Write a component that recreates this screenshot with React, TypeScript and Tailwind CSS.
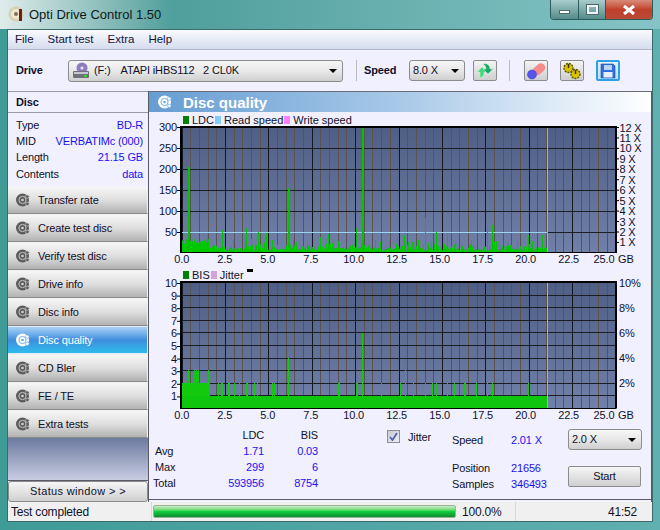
const ui = "font-['Liberation_Sans',sans-serif]";

// deterministic noise for the little LDC bars
function noise(i: number) {
  const v = Math.sin(i * 12.9898) * 43758.5453;
  return v - Math.floor(v);
}

const X0 = 181.5;
const PX_PER_GB = 17.36;
const END = 547.5;
const xTicks = ["0.0", "2.5", "5.0", "7.5", "10.0", "12.5", "15.0", "17.5", "20.0", "22.5", "25.0"];

const ldcSpikes: [number, number][] = [
  [188, 167], [189, 167], [207, 235], [222, 230], [233, 240], [245, 238], [246, 228], [251, 239], [258, 232], [266, 233],
  [272, 240], [288, 188], [289, 188], [293, 240], [307, 241], [320, 237], [328, 234], [338, 241], [356, 228], [362, 127],
  [363, 127], [375, 240], [389, 241], [397, 236], [404, 235], [412, 242], [418, 240], [425, 218], [431, 242], [436, 232],
  [447, 233], [455, 243], [471, 240], [487, 226], [492, 225], [496, 241], [507, 242], [517, 241], [528, 235], [532, 241], [542, 235],
];

const bisTwo = [
  218, 222, 228, 221, 229, 234, 239, 246, 247, 254, 257, 272, 274, 338, 339, 356, 357, 381, 400, 405, 413, 425, 432, 436, 447, 454, 464, 465, 476, 487, 492, 528,
];
const bisSpikes: [number, number][] = [
  [188, 370], [191, 383], [194, 370], [196, 370], [198, 370], [208, 370], [288, 358], [362, 333], [405, 370],
];

function PlotFrame({ top, bottom, step }: { top: number; bottom: number; step: number }) {
  const id = `plot${top}`;
  const lines: number[] = [];
  for (let y = bottom - step; y > top + 1; y -= step) lines.push(y);
  const verticals = Array.from({ length: 51 }, (_, i) => i);
  return (
    <>
      <defs>
        <linearGradient id={id} x1="0" y1="0" x2="0" y2="1">
          <stop offset="0" stopColor="#4e5e84" />
          <stop offset="1" stopColor="#7180a8" />
        </linearGradient>
      </defs>
      <rect x={X0} y={top} width={434} height={bottom - top} fill={`url(#${id})`} />
      {verticals.map((i) => {
        const x = Math.round(X0 + (i * PX_PER_GB) / 2) + 0.5;
        return (
          <line key={i} x1={x} x2={x} y1={top} y2={bottom} stroke={i % 5 === 0 ? "#16161e" : "#5a5352"} strokeWidth={1} />
        );
      })}
      {lines.map((y) => (
        <line key={y} x1={X0} x2={615.5} y1={Math.round(y) + 0.5} y2={Math.round(y) + 0.5} stroke="#1c1c24" strokeWidth={1} />
      ))}
    </>
  );
}

function Axes({ top, bottom }: { top: number; bottom: number }) {
  return (
    <>
      <path d={`M181 ${bottom + 0.5}V${top}H616V${bottom + 0.5}`} fill="none" stroke="#000" strokeWidth={2} />
      <line x1={180} x2={616} y1={bottom + 0.5} y2={bottom + 0.5} stroke="#000" strokeWidth={1} />
      {xTicks.map((t, i) => (
        <text key={t} x={i === 10 ? 604 : 181.7 + i * 43} y={bottom + 11} textAnchor="middle" fill="#10102a" fontSize={11}>
          {t}
        </text>
      ))}
      <text x={618} y={bottom + 11} fill="#10102a" fontSize={11}>
        GB
      </text>
    </>
  );
}

function LdcChart() {
  const bars: { x: number; y: number }[] = [];
  for (let x = 182; x < END; x++) {
    const base = x < 210 ? 8 + noise(x) * 5 : 1.5 + noise(x) * noise(x + 300) * 10;
    bars.push({ x, y: 252 - base });
  }
  const left = ["300", "250", "200", "150", "100", "50"];
  const right = ["12 X", "11 X", "10 X", "9 X", "8 X", "7 X", "6 X", "5 X", "4 X", "3 X", "2 X", "1 X"];
  return (
    <svg width={502} height={140} viewBox="149 126 502 140" className="block overflow-visible font-['Liberation_Sans',sans-serif]">
      <PlotFrame top={127} bottom={253} step={21} />
      <line x1={182} x2={END} y1={232.5} y2={232.5} stroke="#98d4f2" strokeWidth={1} />
      {bars.map((b) => (
        <line key={b.x} x1={b.x + 0.5} x2={b.x + 0.5} y1={252.5} y2={b.y} stroke="#00c800" />
      ))}
      {ldcSpikes.map(([x, y]) => (
        <line key={x} x1={x + 0.5} x2={x + 0.5} y1={252.5} y2={y} stroke="#00c400" />
      ))}
      <line x1={END} x2={END} y1={127} y2={252} stroke="#63c5e8" strokeWidth={1} />
      <Axes top={127} bottom={252} />
      {left.map((t, i) => (
        <g key={t}>
          <text x={177} y={131 + i * 21} textAnchor="end" fill="#10102a" fontSize={11}>
            {t}
          </text>
          <line x1={177} x2={181} y1={127.5 + i * 21} y2={127.5 + i * 21} stroke="#000" />
        </g>
      ))}
      {right.map((t, i) => (
        <g key={t}>
          <line x1={616} x2={619} y1={127.5 + i * 10.45} y2={127.5 + i * 10.45} stroke="#000" />
          <text x={619.5} y={131.5 + i * 10.45} fill="#10102a" fontSize={11}>
            {t}
          </text>
        </g>
      ))}
    </svg>
  );
}

function BisChart() {
  const left = ["10", "9", "8", "7", "6", "5", "4", "3", "2", "1"];
  const right = ["10%", "8%", "6%", "4%", "2%"];
  return (
    <svg width={502} height={141} viewBox="149 281 502 141" className="block overflow-visible font-['Liberation_Sans',sans-serif]">
      <PlotFrame top={282} bottom={408} step={12.6} />
      <rect x={182} y={396} width={END - 182 + 0.5} height={12} fill="#0fc60f" />
      <rect x={182} y={383} width={28} height={13} fill="#13cb0c" />
      {bisTwo.map((x) => (
        <line key={x} x1={x + 0.5} x2={x + 0.5} y1={396} y2={383} stroke="#14c810" />
      ))}
      {bisSpikes.map(([x, y]) => (
        <line key={x} x1={x + 0.5} x2={x + 0.5} y1={396} y2={y} stroke="#14c810" />
      ))}
      <line x1={END} x2={END} y1={282} y2={408} stroke="#63c5e8" strokeWidth={1} />
      <Axes top={282} bottom={408} />
      {left.map((t, i) => (
        <g key={t}>
          <text x={177} y={287 + i * 12.6} textAnchor="end" fill="#10102a" fontSize={11}>
            {t}
          </text>
          <line x1={177} x2={181} y1={283.5 + i * 12.6} y2={283.5 + i * 12.6} stroke="#000" />
        </g>
      ))}
      {right.map((t, i) => (
        <text key={t} x={619} y={287 + i * 25.1} fill="#10102a" fontSize={11}>
          {t}
        </text>
      ))}
    </svg>
  );
}

function DiscIcon({ light, className }: { light?: boolean; className?: string }) {
  const c = light ? "#ffffff" : "#5b5b5b";
  const hole = light ? "#62a8e4" : "#d2d2d2";
  return (
    <svg width={16} height={16} viewBox="0 0 16 16" className={className}>
      <circle cx={7.5} cy={8} r={6.5} fill={c} />
      <circle cx={7.5} cy={8} r={3.6} fill="none" stroke={hole} strokeWidth={0.9} />
      <circle cx={7.5} cy={8} r={1.3} fill={hole} />
      <path d="M11 2.5l3.5 1.5-1.500 2.500-2.500-1zM11.500 10l3 1-1.500 3-2.500-1.500z" fill={c} stroke={hole} strokeWidth={0.6} />
    </svg>
  );
}

const navItems = ["Transfer rate", "Create test disc", "Verify test disc", "Drive info", "Disc info", "Disc quality", "CD Bler", "FE / TE", "Extra tests"];

function NavButton({ label }: { label: string }) {
  const active = label === "Disc quality";
  return (
    <div
      className={`h-[28px] flex items-center gap-[7px] pl-[7px] border-t border-b border-r ${
        active
          ? "bg-gradient-to-b from-[#a8d2f6] via-[#3e8ede] to-[#2cbcec] border-[#dfeaf6] text-white"
          : "bg-gradient-to-b from-[#f6f6f6] via-[#dedede] to-[#b2b2b2] border-[#f2f2f2] border-b-[#8a8a8a] text-[#10102a]"
      }`}
    >
      <DiscIcon light={active} className="shrink-0" />
      <span>{label}</span>
    </div>
  );
}

function ToolButton({ children, selected }: { children: React.ReactNode; selected?: boolean }) {
  return (
    <div
      className={`w-[24px] h-[21px] flex items-center justify-center rounded-[2px] border bg-gradient-to-b ${
        selected ? "border-[#2f9fe8] border-2 from-[#e4f3fc] to-[#bfe0f6]" : "border-[#8c8c8c] from-[#f4f4f4] to-[#cfcfcf]"
      }`}
    >
      {children}
    </div>
  );
}

function Combo({ label, className }: { label: React.ReactNode; className: string }) {
  return (
    <div className={`flex items-center justify-between rounded-[3px] border border-[#8c8c8c] bg-gradient-to-b from-[#f6f6f6] via-[#e8e8e8] to-[#cfcfcf] text-[#10102a] ${className}`}>
      {label}
      <svg width={8} height={4} viewBox="0 0 8 4" className="mr-[5px] shrink-0">
        <path d="M0 0h8L4 4z" fill="#000" />
      </svg>
    </div>
  );
}

function InfoRow({ label, value }: { label: string; value: string }) {
  return (
    <div className="flex justify-between h-[16.3px] items-center">
      <span className="text-[#10102a]">{label}</span>
      <span className="text-[#1c10f0]">{value}</span>
    </div>
  );
}

function LegendSwatch({ color, label }: { color: string; label: string }) {
  return (
    <span className="flex items-center gap-[3px]">
      <span className={`w-[6px] h-[8px] ${color}`} />
      <span>{label}</span>
    </span>
  );
}

export default function App() {
  return (
    <div className={`w-[660px] h-[530px] overflow-hidden flex flex-col bg-gradient-to-r from-[#3f9b95] via-[#4ea5a3] to-[#5fb0ae] text-[11px] tracking-[-0.15px] leading-none ${ui}`}>
      {/* title bar */}
      <div className="h-[29px] shrink-0 flex items-start justify-between pl-[8px] pr-[7px] bg-gradient-to-r from-[#dfeceb] via-[#4f9f9c] to-[#85c4c6] from-[0%] via-[26%]">
        <div className="flex items-center gap-[5px] h-[29px] pb-[1px] text-[13px] tracking-normal text-[#0c1a1a]">
          <svg width={16} height={16} viewBox="0 0 16 16">
            <circle cx={8} cy={8} r={7.5} fill="#d8d0b0" />
            <circle cx={8} cy={8} r={5} fill="#efe9d0" />
            <circle cx={8} cy={8} r={2} fill="#80715a" />
            <path d="M11 3l3 0 0 12-3 0z" fill="#6e2018" />
          </svg>
          <span>Opti Drive Control 1.50</span>
        </div>
        <div className="flex h-[20px] rounded-b-[4px] overflow-hidden border border-t-0 border-[#2c5a5a]">
          <div className="w-[28px] flex items-center justify-center bg-gradient-to-b from-[#a9cccc] to-[#548c8c] border-r border-[#2c5a5a]">
            <span className="w-[11px] h-[4px] mt-[5px] bg-white border border-[#4d6a6a]" />
          </div>
          <div className="w-[27px] flex items-center justify-center bg-gradient-to-b from-[#a9cccc] to-[#548c8c] border-r border-[#2c5a5a]">
            <span className="w-[11px] h-[9px] border-2 border-[#f0f6f6] outline outline-1 outline-[#4d6a6a]" />
          </div>
          <div className="w-[46px] flex items-center justify-center bg-gradient-to-b from-[#d88a78] via-[#c0402a] to-[#b84a36]">
            <svg width={12} height={10} viewBox="0 0 12 10">
              <path d="M1 1l10 8M11 1L1 9" stroke="#fff" strokeWidth={3} />
            </svg>
          </div>
        </div>
      </div>

      {/* client area */}
      <div className="mx-[7px] h-[493px] flex flex-col bg-[#f0f0fe] border border-[#3c6a6a]">
        {/* menu */}
        <div className="h-[20px] shrink-0 flex items-center gap-[14px] pl-[7px] bg-gradient-to-b from-[#fafbfe] to-[#d6dcee] border-b border-[#b4b9cc] text-[11.5px] tracking-normal text-[#14143c]">
          <span>File</span>
          <span>Start test</span>
          <span>Extra</span>
          <span>Help</span>
        </div>

        {/* toolbar */}
        <div className="h-[41px] shrink-0 flex items-center pl-[8px]">
          <span className="w-[52px] font-bold text-[#10102a]">Drive</span>
          <Combo
            className="w-[275px] h-[22px]"
            label={
              <span className="flex items-center gap-[4px] pl-[3px]">
                <svg width={18} height={18} viewBox="0 0 18 18">
                  <circle cx={10} cy={6} r={5.5} fill="#8d7cc0" />
                  <circle cx={10} cy={6} r={1.6} fill="#e9e4f7" />
                  <rect x={1} y={9} width={16} height={7} rx={1} fill="#70707a" />
                  <rect x={2} y={10} width={14} height={2} fill="#c7c7d0" />
                  <rect x={12} y={13} width={3} height={2} fill="#40d040" />
                </svg>
                <span>(F:)</span>
                <span className="ml-[6px] whitespace-pre">ATAPI iHBS112   2 CL0K</span>
              </span>
            }
          />
          <span className="w-px h-[21px] ml-[13px] bg-[#b9b9c8]" />
          <span className="ml-[7px] w-[45px] font-bold text-[#10102a]">Speed</span>
          <Combo className="w-[56px] h-[21px]" label={<span className="pl-[3px]">8.0 X</span>} />
          <div className="ml-[8px]">
            <ToolButton>
              <svg width={18} height={17} viewBox="0 0 18 17">
                <path d="M4 16V10H1l5-5 5 5H8v1c0 2-1 4-4 5z" fill="#3fd87a" stroke="#c6f0d2" strokeWidth={0.6} />
                <path d="M7 2c3-1 6 0 7 4v1h3l-5 5-5-5h3c0-2-1-4-3-5z" fill="#18a868" stroke="#c6f0d2" strokeWidth={0.6} />
              </svg>
            </ToolButton>
          </div>
          <span className="w-px h-[21px] ml-[12px] bg-[#b9b9c8]" />
          <div className="ml-[14px]">
            <ToolButton>
              <svg width={20} height={18} viewBox="0 0 20 18">
                <line x1={11} y1={9} x2={15} y2={5.500} stroke="#f58c8c" strokeWidth={8.500} strokeLinecap="round" />
                <circle cx={6} cy={12.500} r={4.500} fill="#5656ee" stroke="#3434c0" strokeWidth={0.5} />
              </svg>
            </ToolButton>
          </div>
          <div className="ml-[12px]">
            <ToolButton>
              <svg width={20} height={18} viewBox="0 0 20 18">
                <circle cx={6.500} cy={6} r={4.500} fill="#d8c400" stroke="#5a5200" strokeWidth={1.400} strokeDasharray="2 1" />
                <circle cx={13.500} cy={12} r={4.500} fill="#d8c400" stroke="#5a5200" strokeWidth={1.400} strokeDasharray="2 1" />
                <path d="M6.500 2v4M13.500 8v4" stroke="#3c3400" strokeWidth={1.500} />
              </svg>
            </ToolButton>
          </div>
          <div className="ml-[12px]">
            <ToolButton selected>
              <svg width={16} height={16} viewBox="0 0 16 16">
                <path d="M1 1h12l2 2v12H1z" fill="#2f6fe0" stroke="#1d4aa8" strokeWidth={0.6} />
                <rect x={4} y={2} width={8} height={5} fill="#bcd4fa" />
                <rect x={3.500} y={9} width={9} height={5.500} fill="#e6eefc" />
              </svg>
            </ToolButton>
          </div>
        </div>

        {/* body */}
        <div className="h-[411px] flex">
          <div className="w-[141px] shrink-0 flex flex-col border-r border-[#5a5a66]">
            <div className="h-[22px] shrink-0 flex items-center pl-[8px] font-bold border-t border-b border-[#9a9aa6] text-[#10102a]">Disc</div>
            <div className="h-[73px] shrink-0 pr-[5px] pl-[8px] pt-[4px]">
              <InfoRow label="Type" value="BD-R" />
              <InfoRow label="MID" value="VERBATIMc (000)" />
              <InfoRow label="Length" value="21.15 GB" />
              <InfoRow label="Contents" value="data" />
            </div>
            {navItems.map((n) => (
              <NavButton key={n} label={n} />
            ))}
            <div className="flex-1 bg-gradient-to-b from-[#6d7ba0] to-[#c9cde2] border-b border-[#5a5a66]" />
            <div className="h-[21px] shrink-0 flex items-center justify-center rounded-[3px] border border-[#8c8c8c] bg-gradient-to-b from-[#f6f6f6] to-[#d0d0d0] text-[#10102a] tracking-[0.35px]">
              Status window &gt; &gt;
            </div>
          </div>

          <div className="flex-1 flex flex-col min-w-0 border-t border-[#6c6c78] border-r border-r-[#5a5a66]">
            <div className="h-[20px] shrink-0 flex items-center gap-[10px] pl-[8px] bg-gradient-to-r from-[#669dd3] via-[#a8c9e8] to-[#ffffff] text-white font-bold text-[15px] tracking-normal">
              <DiscIcon light />
              <span>Disc quality</span>
            </div>
            <div className="h-[14px] shrink-0 flex items-center gap-[1px] pl-[34px] pt-[2px] text-[#10102a] tracking-normal">
              <LegendSwatch color="bg-[#008000]" label="LDC" />
              <LegendSwatch color="bg-[#80ccff]" label="Read speed" />
              <LegendSwatch color="bg-[#ff80ff]" label="Write speed" />
            </div>
            <LdcChart />
            <div className="h-[15px] shrink-0 flex items-center gap-[1px] pl-[34px] pt-[3px] text-[#10102a] tracking-normal">
              <LegendSwatch color="bg-[#008000]" label="BIS" />
              <LegendSwatch color="bg-[#d4a4d8]" label="Jitter" />
              <span className="w-[6px] h-[3px] -mt-[10px] ml-[2px] bg-black" />
            </div>
            <BisChart />

            {/* stats */}
            <div className="h-[78px] shrink-0 flex border-b border-[#5a5a66]">
              <div className="w-[170px] shrink-0 pt-[5px] grid grid-cols-[48px_64px_54px] auto-rows-[16.2px] items-center pl-[3px] text-right">
                <span />
                <span className="text-[#10102a]">LDC</span>
                <span className="text-[#10102a]">BIS</span>
                <span className="text-left text-[#10102a] pl-[3px]">Avg</span>
                <span className="text-[#1c10f0]">1.71</span>
                <span className="text-[#1c10f0]">0.03</span>
                <span className="text-left text-[#10102a] pl-[3px]">Max</span>
                <span className="text-[#1c10f0]">299</span>
                <span className="text-[#1c10f0]">6</span>
                <span className="text-left text-[#10102a] pl-[1px]">Total</span>
                <span className="text-[#1c10f0]">593956</span>
                <span className="text-[#1c10f0]">8754</span>
              </div>
              <div className="ml-[68px] w-[65px] shrink-0 pt-[8px] flex items-start gap-[8px]">
                <span className="w-[13px] h-[13px] flex items-center justify-center border border-[#8e8f8f] bg-gradient-to-br from-[#c8c8d4] to-[#eeeef6]">
                  <svg width={9} height={9} viewBox="0 0 9 9">
                    <path d="M1 5l2.500 3L8 1" fill="none" stroke="#4a62a8" strokeWidth={1.700} />
                  </svg>
                </span>
                <span className="text-[#10102a] pt-[2px]">Jitter</span>
              </div>
              <div className="w-[116px] shrink-0 pt-[10px] grid grid-cols-[59px_57px] grid-rows-[16px_12px_16px_16px] items-center content-start">
                <span className="text-[#10102a]">Speed</span>
                <span className="text-[#1c10f0]">2.01 X</span>
                <span />
                <span />
                <span className="text-[#10102a]">Position</span>
                <span className="text-[#1c10f0]">21656</span>
                <span className="text-[#10102a]">Samples</span>
                <span className="text-[#1c10f0]">346493</span>
              </div>
              <div className="flex flex-col pt-[7px] gap-[16px]">
                <Combo className="w-[74px] h-[21px]" label={<span className="pl-[3px]">2.0 X</span>} />
                <div className="w-[73px] h-[21px] flex items-center justify-center rounded-[2px] border border-[#8c8c8c] bg-gradient-to-b from-[#f6f6f6] to-[#cfcfcf] text-[#10102a]">
                  Start
                </div>
              </div>
            </div>
          </div>
        </div>

        {/* status bar */}
        <div className="flex-1 flex items-center text-[#10102a] bg-[#f0f0f0] text-[12px] tracking-[-0.2px]">
          <div className="w-[144px] shrink-0 pl-[3px] border-r border-[#d8d8d8] h-full flex items-center">Test completed</div>
          <div className="w-[303px] h-[13px] ml-[1px] shrink-0 rounded-[2px] border border-[#9ab49a] bg-gradient-to-b from-[#cdeccd] via-[#0ed03e] to-[#108a30]" />
          <div className="w-[60px] shrink-0 pl-[6px] border-r border-[#d8d8d8] h-full flex items-center">100.0%</div>
          <div className="flex-1 pr-[15px] text-right">41:52</div>
        </div>
      </div>
    </div>
  );
}
